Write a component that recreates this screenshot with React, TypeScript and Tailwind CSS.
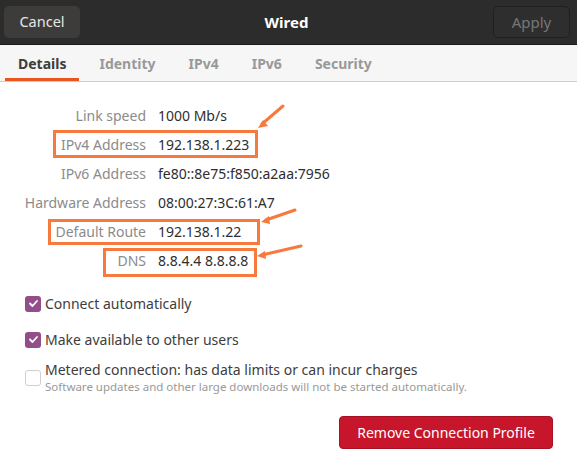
import React from 'react';

const rows: [string, string][] = [
  ['Link speed', '1000 Mb/s'],
  ['IPv4 Address', '192.138.1.223'],
  ['IPv6 Address', 'fe80::8e75:f850:a2aa:7956'],
  ['Hardware Address', '08:00:27:3C:61:A7'],
  ['Default Route', '192.138.1.22'],
  ['DNS', '8.8.4.4 8.8.8.8'],
];

const tabs = ['Details', 'Identity', 'IPv4', 'IPv6', 'Security'];

function Check({ on }: { on: boolean }) {
  return on ? (
    <span className="flex h-[16px] w-[16px] shrink-0 items-center justify-center rounded-[3px] bg-[#924d8b]">
      <svg width="11" height="11" viewBox="0 0 11 11"><path d="M2 5.5l2.5 2.5L9 3" fill="none" stroke="#fff" strokeWidth="1.8" strokeLinecap="round" strokeLinejoin="round"/></svg>
    </span>
  ) : (
    <span className="h-[16px] w-[16px] shrink-0 rounded-[3px] border border-[#cfcfcf] bg-white" />
  );
}

export default function App() {
  return (
    <div className="relative h-[473px] w-[577px] overflow-hidden bg-white font-['Noto_Sans',sans-serif] text-[14px] text-[#3d3d3d]">
      <div className="flex h-[45px] items-center justify-between border-b border-[#1c1c1c] bg-[#2c2c2c] px-[4px]">
        <button className="h-[32px] w-[76px] rounded-[5px] bg-[#3d3c3a] text-[14.5px] text-[#e6e6e6]">Cancel</button>
        <span className="text-[15px] font-bold text-white">Wired</span>
        <button className="mr-[3px] h-[32px] w-[77px] rounded-[5px] border border-[#202020] bg-[#2e2e2e] text-[15px] text-[#777]">Apply</button>
      </div>
      <div className="flex h-[37px] gap-[7px] border-b border-[#cdcdcd] bg-[#f6f6f6] pl-[5px]">
        {tabs.map((t, i) => (
          <div key={t} className={`flex items-center px-[13px] text-[14px] font-bold ${i === 0 ? 'border-b-[3px] border-[#e95420] pt-[3px] text-[#3d3d3d]' : 'text-[#999]'}`}>{t}</div>
        ))}
      </div>
      <div className="flex flex-col gap-[11px] pt-[24px]">
        {rows.map(([k, v]) => (
          <div key={k} className="flex h-[18px] items-center">
            <span className="w-[146px] text-right text-[#8b8b8b]">{k}</span>
            <span className="pl-[12px] text-[#2e2e2e]">{v}</span>
          </div>
        ))}
      </div>
      <div className="mt-[24px] flex flex-col pl-[25px]">
        <label className="flex items-center gap-[4px]"><Check on /> <span className="text-[14px]">Connect automatically</span></label>
        <label className="mt-[15px] flex items-center gap-[4px]"><Check on /> <span className="text-[14px]">Make available to other users</span></label>
        <label className="mt-[11px] flex items-center gap-[4px]">
          <Check on={false} />
          <span className="flex flex-col leading-[15px]">
            <span className="text-[14px] leading-[18px]">Metered connection: has data limits or can incur charges</span>
            <span className="text-[11.5px] text-[#999]">Software updates and other large downloads will not be started automatically.</span>
          </span>
        </label>
      </div>
      <div className="mt-[22px] flex justify-end pr-[24px]">
        <button className="h-[33px] w-[214px] rounded-[4px] border border-[#a61223] bg-[#c7162b] text-[14px] text-white">Remove Connection Profile</button>
      </div>
      <svg className="pointer-events-none absolute left-0 top-0" width="577" height="473">
        <g fill="none" stroke="#f7793e" strokeWidth="3">
          <rect x="54.5" y="131.5" width="202" height="25" />
          <rect x="49.5" y="220.5" width="209" height="23" />
          <rect x="104.5" y="249.5" width="151" height="26" />
          <path d="M283 106L262 124" strokeLinecap="round" />
          <path d="M295 210L266 220" strokeLinecap="round" />
          <path d="M301 246L262 255" strokeLinecap="round" />
        </g>
        <g fill="#f7793e">
          <path d="M258 128l10-2-5-6z" />
          <path d="M261 222l9 2-1-8z" />
          <path d="M257 256l9 3-1-8z" />
        </g>
      </svg>
    </div>
  );
}
